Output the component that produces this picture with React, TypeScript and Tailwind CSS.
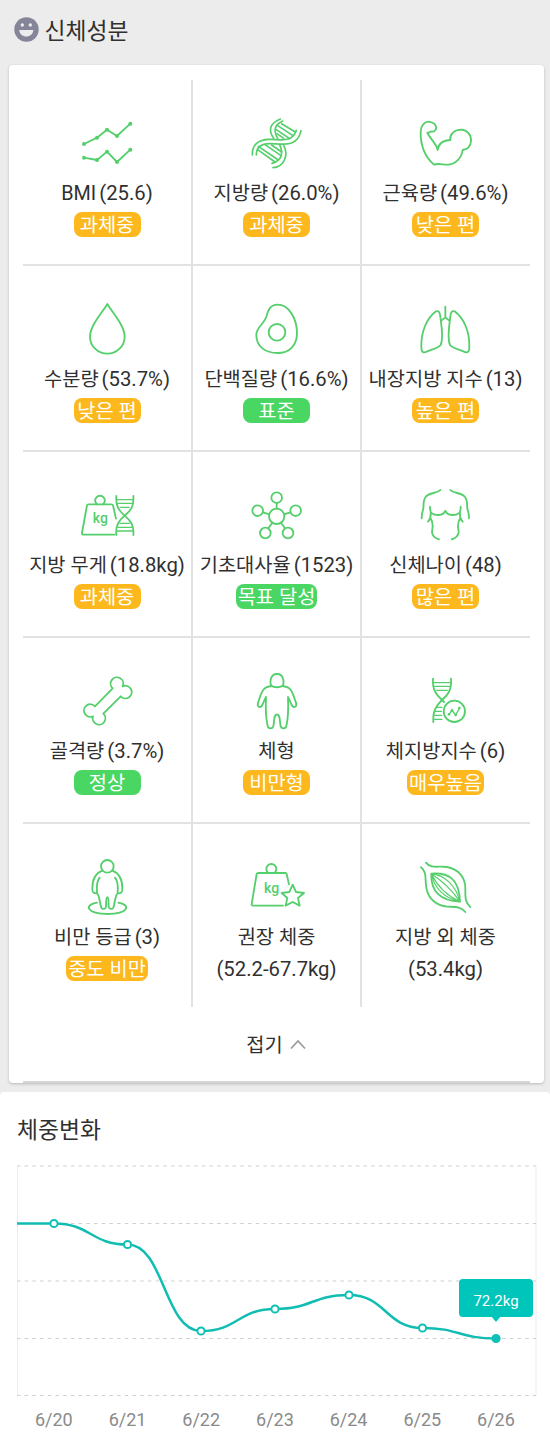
import type { ReactNode } from "react";

type Tone = "warn" | "good";

type Metric = {
  name: string;
  value?: string;
  icon: ReactNode;
  badge?: string;
  tone?: Tone;
  sub?: string;
};

const badgeTone: Record<Tone, string> = {
  warn: "bg-[#fdb81e]",
  good: "bg-[#4ad662]",
};

function Icon({ children }: { children: ReactNode }) {
  return (
    <svg
      viewBox="0 0 180 180"
      className="w-[60px] h-[60px] shrink-0"
      fill="none"
      stroke="#55cf6c"
      strokeWidth="5.5"
      strokeLinecap="round"
      strokeLinejoin="round"
    >
      {children}
    </svg>
  );
}

function Kg({ x, y }: { x: number; y: number }) {
  return (
    <text x={x} y={y} textAnchor="middle" fontSize="42" fontWeight="500" fontFamily="Roboto, sans-serif" fill="#55cf6c" stroke="none">
      kg
    </text>
  );
}

function TrendIcon() {
  const rows = [
    [[21, 93], [60, 74], [90, 50], [120, 69], [160, 32]],
    [[21, 134], [60, 141], [90, 116], [120, 147], [160, 110]],
  ];
  return (
    <Icon>
      {rows.map((pts, i) => (
        <g key={i}>
          <polyline points={pts.join(" ")} />
          {pts.map(([x, y]) => (
            <circle key={x} cx={x} cy={y} r="6" fill="#55cf6c" stroke="none" />
          ))}
        </g>
      ))}
    </Icon>
  );
}

function DnaIcon() {
  return (
    <Icon>
      <g strokeWidth="5">
        <path d="M16 126C15 95 35 80 65 79C100 78 135 92 148 52" />
        <path d="M28 126C28 102 42 92 68 92C105 92 152 105 162 53" />
        <path d="M100 18C65 32 65 55 80 76M107 24C80 36 80 55 92 76" />
        <path d="M98 95C110 122 104 143 75 151M109 95C128 130 108 162 78 164" />
        <path d="M104 32L146 58M92 38L138 68M88 50L128 77M90 62L110 76" />
        <path d="M34 100L94 141M32 110L84 147M54 95L102 128M74 96L104 117" />
      </g>
    </Icon>
  );
}

function ArmIcon() {
  return (
    <Icon>
      <path d="M54 155C28 132 13 100 14 56C14 38 26 26 39 26C52 28 60 36 61 45C59 54 52 58 45 55C42 58 38 60 34 59C40 75 62 92 65 111C67 94 80 82 103 81C100 66 114 50 135 50C154 51 166 66 165 84C164 99 154 109 140 111C137 135 117 156 94 155C80 155 67 150 54 155Z" />
    </Icon>
  );
}

function DropIcon() {
  return (
    <Icon>
      <path d="M91 15C75 42 39 80 39 113A52 51 0 0 0 143 113C143 80 107 42 91 15Z" />
    </Icon>
  );
}

function EggIcon() {
  return (
    <Icon>
      <path d="M92 17C125 17 150 58 150 103C150 138 128 162 92 162C55 162 28 143 28 108C28 83 50 78 58 53C63 33 70 17 92 17Z" />
      <circle cx="90" cy="100" r="25" />
    </Icon>
  );
}

function LungsIcon() {
  const lung = "M60 37C32 58 15 98 16 143C16 163 24 162 34 157C47 151 66 149 74 138C84 118 75 73 73 53C72 38 67 35 60 37Z";
  return (
    <Icon>
      <path d="M88 23V55M76 65L88 55L100 65" />
      <path d={lung} />
      <path d={lung} transform="translate(176 0) scale(-1 1)" />
    </Icon>
  );
}

function FatWeightIcon() {
  return (
    <Icon>
      <path d="M60 58A14.5 14.5 0 1 1 78 58" />
      <path d="M117 101L108 61Q107 58 104 58H34Q31 58 30 61L15 144Q14 149 20 149H112" />
      <Kg x={70} y={115} />
      <path d="M118 33C115 70 131 80 143 92C158 105 172 118 169 150" />
      <path d="M169 33C172 70 156 80 143 92C128 105 115 118 118 150" />
      <path strokeWidth="4" d="M120 44H167M122 55H165M129 67H157M129 115H157M122 127H165M120 138H167" />
    </Icon>
  );
}

function MoleculeIcon() {
  const nodes = [[89, 38], [32, 77], [146, 77], [55, 144], [123, 144]];
  return (
    <Icon>
      <path d="M89 54V71M48 82L67 88M130 82L111 88M64 130L76 113M114 130L102 113" />
      <circle cx="89" cy="94" r="23" />
      {nodes.map(([x, y]) => (
        <circle key={`${x}-${y}`} cx={x} cy={y} r="16" />
      ))}
    </Icon>
  );
}

function TorsoIcon() {
  const half = "M73 15C62 27 40 21 29 36C18 50 26 66 20 78C17 86 17 92 17 100M42 65C42 74 43 80 46 84C58 92 80 94 88 78M44 82C45 95 42 104 36 110M43 98C56 118 48 130 48 142C50 155 58 160 69 163";
  return (
    <Icon>
      <path d={half} />
      <path d={half} transform="translate(176 0) scale(-1 1)" />
    </Icon>
  );
}

function BoneIcon() {
  return (
    <Icon>
      <path d="M107 52A19 19 0 1 1 137 46A19 19 0 1 1 131 76L79 128A19 19 0 1 1 48 136A19 19 0 1 1 54 106Z" />
    </Icon>
  );
}

function BodyIcon() {
  return (
    <Icon>
      <path d="M74 45C68 38 68 9 90 9C112 9 112 38 106 45C100 50 80 50 74 45Z" />
      <path d="M74 45C44 48 44 66 33 95C29 112 42 110 46 102C51 92 52 86 57 78C56 100 56 140 62 165C64 174 76 174 79 166C83 145 80 132 90 130C100 132 97 145 101 166C104 174 116 174 118 165C124 140 124 100 123 78C128 86 129 92 134 102C138 110 151 112 147 95C136 66 136 48 106 45" />
    </Icon>
  );
}

function FatIndexIcon() {
  return (
    <Icon>
      <path d="M51 23C48 60 65 75 78 87L84 93" />
      <path d="M105 23C108 60 92 75 78 87C60 105 50 120 52 153" />
      <path strokeWidth="4" d="M53 35H103M55 46H101M62 58H94M64 109H78M57 121H76M54 133H77M53 145H78" />
      <circle cx="115" cy="121" r="32" />
      <path strokeWidth="4" d="M99 130L108 118L119 132L130 112" />
      <g fill="#55cf6c" stroke="none">
        <circle cx="99" cy="130" r="4" />
        <circle cx="108" cy="118" r="4" />
        <circle cx="119" cy="132" r="4" />
        <circle cx="130" cy="111" r="4" />
      </g>
    </Icon>
  );
}

function ObesityIcon() {
  const half = "M76 41C54 49 46 70 46 94C45 106 50 110 60 109M68 62C56 76 60 92 60 109C69 118 68 140 73 152C77 158 86 156 87 149C88 138 86 122 91 121";
  return (
    <Icon>
      <circle cx="91" cy="28" r="19" />
      <path d={half} />
      <path d={half} transform="translate(182 0) scale(-1 1)" />
      <path d="M60 137C20 143 28 171 92 171C156 171 162 143 124 137" />
    </Icon>
  );
}

function TargetWeightIcon() {
  return (
    <Icon>
      <path d="M64 48A15 15 0 1 1 82 48" />
      <path d="M126 82L119 51Q118 48 115 48H33Q30 48 29 51L14 141Q13 146 18 146H108" />
      <Kg x={74} y={109} />
      <path d="M137 83L147 105L171 108L153 123L158 146L137 135L116 146L121 123L104 108L127 105Z" />
    </Icon>
  );
}

function MuscleIcon() {
  return (
    <Icon>
      <path d="M15 31C34 46 26 66 31 92C36 126 62 146 94 149C118 150 134 148 148 165" />
      <path d="M30 17C44 36 68 26 92 30C128 36 148 62 148 94C148 118 146 136 163 150" />
      <path d="M46 50C98 46 130 66 132 134C72 132 44 102 46 50Z" />
      <path strokeWidth="3.5" d="M46 50C88 54 120 88 132 134M46 50C76 70 112 104 132 134M46 50C62 84 94 116 132 134M46 50C54 94 86 124 132 134" />
    </Icon>
  );
}

const metrics: Metric[] = [
  { name: "BMI", value: "(25.6)", icon: <TrendIcon />, badge: "과체중", tone: "warn" },
  { name: "지방량", value: "(26.0%)", icon: <DnaIcon />, badge: "과체중", tone: "warn" },
  { name: "근육량", value: "(49.6%)", icon: <ArmIcon />, badge: "낮은 편", tone: "warn" },
  { name: "수분량", value: "(53.7%)", icon: <DropIcon />, badge: "낮은 편", tone: "warn" },
  { name: "단백질량", value: "(16.6%)", icon: <EggIcon />, badge: "표준", tone: "good" },
  { name: "내장지방 지수", value: "(13)", icon: <LungsIcon />, badge: "높은 편", tone: "warn" },
  { name: "지방 무게", value: "(18.8kg)", icon: <FatWeightIcon />, badge: "과체중", tone: "warn" },
  { name: "기초대사율", value: "(1523)", icon: <MoleculeIcon />, badge: "목표 달성", tone: "good" },
  { name: "신체나이", value: "(48)", icon: <TorsoIcon />, badge: "많은 편", tone: "warn" },
  { name: "골격량", value: "(3.7%)", icon: <BoneIcon />, badge: "정상", tone: "good" },
  { name: "체형", icon: <BodyIcon />, badge: "비만형", tone: "warn" },
  { name: "체지방지수", value: "(6)", icon: <FatIndexIcon />, badge: "매우높음", tone: "warn" },
  { name: "비만 등급", value: "(3)", icon: <ObesityIcon />, badge: "중도 비만", tone: "warn" },
  { name: "권장 체중", icon: <TargetWeightIcon />, sub: "(52.2-67.7kg)" },
  { name: "지방 외 체중", icon: <MuscleIcon />, sub: "(53.4kg)" },
];

function MetricCell({ metric, index }: { metric: Metric; index: number }) {
  const right = index % 3 < 2 ? "border-r-2" : "pr-px";
  const bottom = index < 12 ? "border-b-2" : "";
  return (
    <div className={`flex flex-col items-center pt-[33px] border-[#e2e2e2] ${right} ${bottom}`}>
      {metric.icon}
      <div className="h-[39px] flex items-baseline gap-[3px] leading-[41px] text-[19.8px] whitespace-nowrap">
        <span>{metric.name}</span>
        {metric.value && <span className="text-[20.3px]">{metric.value}</span>}
      </div>
      {metric.badge && (
        <div
          className={`h-[25px] min-w-[67px] px-[2px] rounded-[8px] text-center text-white text-[19.8px] leading-[27px] whitespace-nowrap ${badgeTone[metric.tone ?? "warn"]}`}
        >
          {metric.badge}
        </div>
      )}
      {metric.sub && <div className="h-[25px] leading-[27px] text-[20.3px] whitespace-nowrap">{metric.sub}</div>}
    </div>
  );
}

const points = [
  { date: "6/20", x: 54, y: 58 },
  { date: "6/21", x: 127.5, y: 79 },
  { date: "6/22", x: 201, y: 165.5 },
  { date: "6/23", x: 275, y: 143.5 },
  { date: "6/24", x: 349, y: 129.5 },
  { date: "6/25", x: 422.5, y: 162.5 },
  { date: "6/26", x: 496, y: 173 },
];

function curve() {
  let d = `M17 ${points[0].y}H${points[0].x}`;
  for (let i = 1; i < points.length; i++) {
    const a = points[i - 1];
    const b = points[i];
    const mid = (a.x + b.x) / 2;
    d += `C${mid} ${a.y} ${mid} ${b.y} ${b.x} ${b.y}`;
  }
  return d;
}

function WeightChart() {
  return (
    <div className="relative">
      <svg width="550" height="234" viewBox="0 -0.5 550 234" className="block" fill="none">
        <path d="M17.5 0.5V230M536 0.5V230" stroke="#ededed" />
        {[0.5, 58, 115.5, 173, 230].map((y) => (
          <path key={y} d={`M17 ${y}H536`} stroke="#cfcfcf" strokeDasharray="3.5 4.2" />
        ))}
        <path d={curve()} stroke="#11bdb3" strokeWidth="2.5" />
        {points.map((p, i) => (
          <circle
            key={p.date}
            cx={p.x}
            cy={p.y}
            r="3.6"
            fill={i === points.length - 1 ? "#0fc0b7" : "#fff"}
            stroke="#0fc0b7"
            strokeWidth="2"
          />
        ))}
        <path d="M491 150.5H501L496 156.5Z" fill="#00c5bb" />
      </svg>
      <div className="absolute left-[459px] top-[114px] w-[74px] h-[38px] rounded-[4px] bg-[#00c5bb] text-white text-[15px] leading-[44px] text-center">
        72.2kg
      </div>
    </div>
  );
}

export default function App() {
  return (
    <div className="w-[550px] h-[1440px] overflow-hidden bg-[#ececec] text-[#303030] font-['Roboto','Noto_Sans_CJK_KR',sans-serif]">
      <header className="h-[65px] pl-[13.5px] flex items-start gap-[6px]">
        <svg width="25" height="25" viewBox="0 0 25 25" className="mt-[17px]">
          <circle cx="12.5" cy="12.5" r="12.2" fill="#85859a" />
          <circle cx="8.3" cy="8" r="1.7" fill="#ececec" />
          <circle cx="16.3" cy="8" r="1.7" fill="#ececec" />
          <path d="M5.2 13H19.4C19 17.2 16 19.5 12.3 19.5S5.6 17.2 5.2 13Z" fill="#ececec" />
        </svg>
        <h1 className="mt-[16px] text-[22.8px] leading-[32px]">신체성분</h1>
      </header>

      <section className="ml-[9px] w-[535px] h-[1018px] px-[14px] pt-[15px] flex flex-col bg-white rounded-[4px] shadow-[0_1px_3px_rgba(0,0,0,0.22)]">
        <div className="grid grid-cols-[170px_169px_168px] grid-rows-[186px_186px_186px_186px_183px]">
          {metrics.map((metric, i) => (
            <MetricCell key={metric.name} metric={metric} index={i} />
          ))}
        </div>
        <button className="flex-1 flex items-center justify-center gap-[7px] pr-px pt-[3px] text-[19.8px] border-b-2 border-[#d6d6d6]">
          접기
          <svg width="16" height="11" viewBox="0 0 16 11" className="-mt-[3px]" fill="none" stroke="#9a9a9a" strokeWidth="1.7">
            <path d="M1 9.5L8 2L15 9.5" />
          </svg>
        </button>
      </section>

      <section className="mt-[9px] h-[348px] bg-white rounded-t-[4px]">
        <h2 className="h-[73px] pl-[17px] pt-[23px] text-[22.8px] leading-[32px]">체중변화</h2>
        <WeightChart />
        <div className="mt-[9px] pl-[17px] flex text-[18px] leading-[24px] text-[#8a8a8a]">
          {points.map((p) => (
            <span key={p.date} className="w-[73.7px] text-center">
              {p.date}
            </span>
          ))}
        </div>
      </section>
    </div>
  );
}
